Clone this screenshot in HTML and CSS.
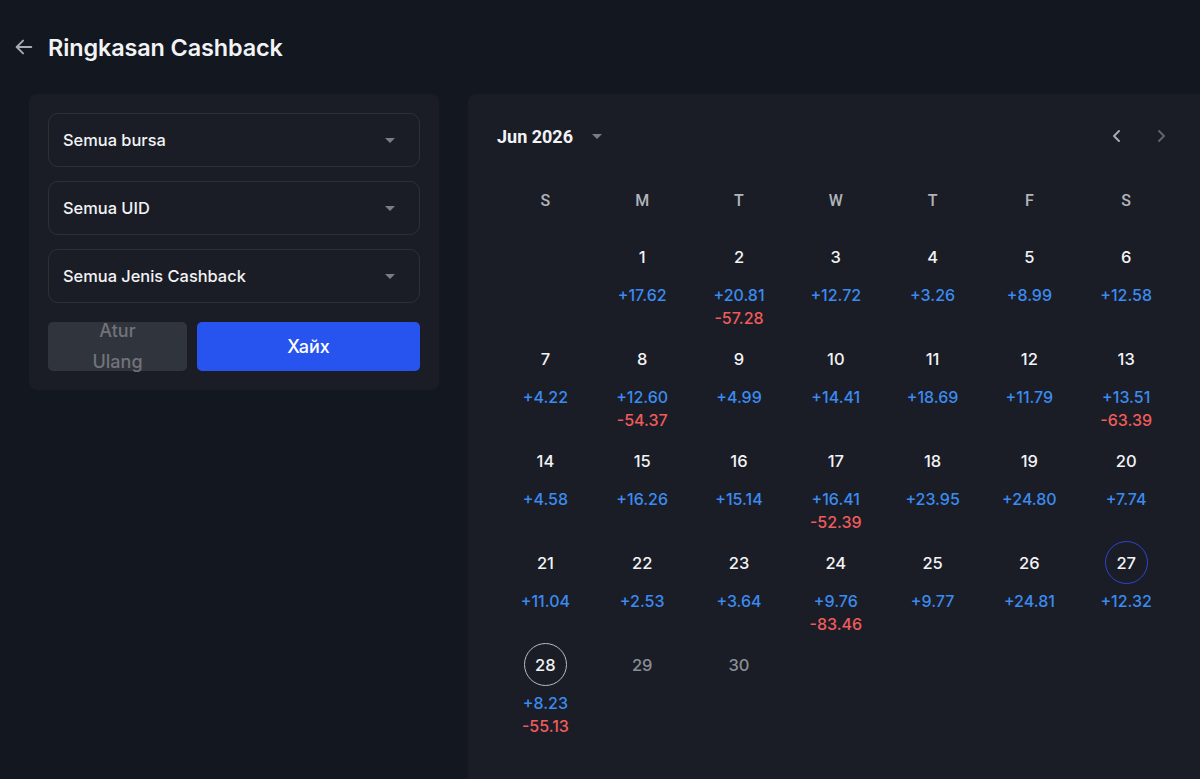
FILE: index.html
```html
<!DOCTYPE html>
<html lang="id">
<head>
  <meta charset="UTF-8">
  <meta name="viewport" content="width=device-width, initial-scale=1.0">
  <title>Ringkasan Cashback</title>
  <link rel="stylesheet" href="styles.css">
</head>
<body>
  <header class="topo">
    <button class="voltar" aria-label="Kembali">
      <svg width="22" height="22" viewBox="0 0 24 24" fill="none" stroke="currentColor" stroke-width="2" stroke-linecap="round" stroke-linejoin="round"><path d="M20 12H4"/><path d="M11 5l-7 7 7 7"/></svg>
    </button>
    <h1>Ringkasan Cashback</h1>
  </header>

  <main class="conteudo">
    <!-- Filtros -->
    <section class="filtros">
      <div class="select"><span>Semua bursa</span><i class="caret"></i></div>
      <div class="select"><span>Semua UID</span><i class="caret"></i></div>
      <div class="select"><span>Semua Jenis Cashback</span><i class="caret"></i></div>
      <div class="acoes">
        <button class="btn btn-reset">Atur Ulang</button>
        <button class="btn btn-buscar">Хайх</button>
      </div>
    </section>

    <!-- Calendário -->
    <section class="calendario">
      <div class="cal-topo">
        <div class="mes">Jun 2026 <i class="caret"></i></div>
        <div class="setas">
          <svg class="seta ativa" width="16" height="16" viewBox="0 0 16 16" fill="none" stroke="currentColor" stroke-width="2" stroke-linecap="round" stroke-linejoin="round"><path d="M10 3L5 8l5 5"/></svg>
          <svg class="seta" width="16" height="16" viewBox="0 0 16 16" fill="none" stroke="currentColor" stroke-width="2" stroke-linecap="round" stroke-linejoin="round"><path d="M6 3l5 5-5 5"/></svg>
        </div>
      </div>

      <div class="semana">
        <span>S</span><span>M</span><span>T</span><span>W</span><span>T</span><span>F</span><span>S</span>
      </div>

      <div class="dias">
        <div class="dia vazio"></div>
        <div class="dia"><b>1</b><p class="mais">+17.62</p></div>
        <div class="dia"><b>2</b><p class="mais">+20.81</p><p class="menos">-57.28</p></div>
        <div class="dia"><b>3</b><p class="mais">+12.72</p></div>
        <div class="dia"><b>4</b><p class="mais">+3.26</p></div>
        <div class="dia"><b>5</b><p class="mais">+8.99</p></div>
        <div class="dia"><b>6</b><p class="mais">+12.58</p></div>

        <div class="dia"><b>7</b><p class="mais">+4.22</p></div>
        <div class="dia"><b>8</b><p class="mais">+12.60</p><p class="menos">-54.37</p></div>
        <div class="dia"><b>9</b><p class="mais">+4.99</p></div>
        <div class="dia"><b>10</b><p class="mais">+14.41</p></div>
        <div class="dia"><b>11</b><p class="mais">+18.69</p></div>
        <div class="dia"><b>12</b><p class="mais">+11.79</p></div>
        <div class="dia"><b>13</b><p class="mais">+13.51</p><p class="menos">-63.39</p></div>

        <div class="dia"><b>14</b><p class="mais">+4.58</p></div>
        <div class="dia"><b>15</b><p class="mais">+16.26</p></div>
        <div class="dia"><b>16</b><p class="mais">+15.14</p></div>
        <div class="dia"><b>17</b><p class="mais">+16.41</p><p class="menos">-52.39</p></div>
        <div class="dia"><b>18</b><p class="mais">+23.95</p></div>
        <div class="dia"><b>19</b><p class="mais">+24.80</p></div>
        <div class="dia"><b>20</b><p class="mais">+7.74</p></div>

        <div class="dia"><b>21</b><p class="mais">+11.04</p></div>
        <div class="dia"><b>22</b><p class="mais">+2.53</p></div>
        <div class="dia"><b>23</b><p class="mais">+3.64</p></div>
        <div class="dia"><b>24</b><p class="mais">+9.76</p><p class="menos">-83.46</p></div>
        <div class="dia"><b>25</b><p class="mais">+9.77</p></div>
        <div class="dia"><b>26</b><p class="mais">+24.81</p></div>
        <div class="dia"><b class="selecionado">27</b><p class="mais">+12.32</p></div>

        <div class="dia"><b class="hoje">28</b><p class="mais">+8.23</p><p class="menos">-55.13</p></div>
        <div class="dia futuro"><b>29</b></div>
        <div class="dia futuro"><b>30</b></div>
      </div>
    </section>
  </main>
</body>
</html>
```

FILE: styles.css
```css
:root {
  --fundo: #131720;
  --painel: #1a1d26;
  --borda: #2c3039;
  --texto: #f2f3f5;
  --cinza: #8b8e95;
  --azul: #3b8bf0;
  --vermelho: #f05b5b;
  --azul-botao: #2754ef;
}

* {
  box-sizing: border-box;
}

html, body {
  height: 100%;
}

body {
  margin: 0;
  background: var(--fundo);
  color: var(--texto);
  font-family: Inter, 'Noto Sans', sans-serif;
  overflow: hidden;
}

.topo {
  height: 94px;
  display: flex;
  align-items: center;
  padding: 0 0 0 13px;
  gap: 13px;
}

.voltar {
  background: none;
  border: none;
  padding: 0;
  color: #a9acb3;
  display: flex;
  cursor: pointer;
}

.topo h1 {
  margin: 0;
  font-size: 23.4px;
  font-weight: 600;
  letter-spacing: -0.1px;
}

.conteudo {
  display: flex;
  align-items: flex-start;
  gap: 29px;
  padding-left: 29px;
  width: 1240px;
}

.filtros {
  width: 410px;
  background: var(--painel);
  border-radius: 8px;
  padding: 19px;
  display: flex;
  flex-direction: column;
  gap: 14px;
}

.select {
  height: 54px;
  border: 1px solid var(--borda);
  border-radius: 10px;
  display: flex;
  align-items: center;
  justify-content: space-between;
  padding: 0 24px 0 14px;
  font-size: 16.4px;
  font-weight: 500;
}

.caret {
  display: inline-block;
  width: 0;
  height: 0;
  border-left: 5px solid transparent;
  border-right: 5px solid transparent;
  border-top: 5px solid #7a7d84;
}

.acoes {
  display: flex;
  gap: 10px;
  margin-top: 5px;
}

.btn {
  height: 49px;
  border: none;
  border-radius: 5px;
  font-family: Inter, sans-serif;
  font-size: 18px;
  font-weight: 500;
  cursor: pointer;
}

.btn-reset {
  width: 139px;
  background: #30343c;
  color: #70737a;
  line-height: 31px;
  padding: 0 40px 2px;
  display: flex;
  flex-direction: column;
  justify-content: center;
  align-items: center;
  text-align: center;
}

.btn-buscar {
  flex: 1;
  background: var(--azul-botao);
  color: #fff;
}

.calendario {
  width: 740px;
  min-height: 700px;
  background: var(--painel);
  border-radius: 8px 0 0 0;
  padding: 26px 29px 0 29px;
}

.cal-topo {
  display: flex;
  justify-content: space-between;
  align-items: center;
  height: 32px;
}

.mes {
  font-family: Roboto, sans-serif;
  font-size: 18px;
  font-weight: 700;
  display: flex;
  align-items: center;
  gap: 19px;
}

.setas {
  display: flex;
  gap: 28px;
  margin-right: 10px;
}

.seta {
  color: #5f636b;
}

.seta.ativa {
  color: #a7aab1;
}

.semana {
  display: grid;
  grid-template-columns: repeat(7, 96.8px);
  margin-top: 24px;
  height: 48px;
  align-items: center;
  font-family: Roboto, sans-serif;
  font-size: 16px;
  font-weight: 500;
  color: #b1b4bb;
  text-align: center;
}

.dias {
  display: grid;
  grid-template-columns: repeat(7, 96.8px);
  grid-auto-rows: 102px;
  margin-top: 11px;
}

.dia {
  display: flex;
  flex-direction: column;
  align-items: center;
}

.dia b {
  width: 43px;
  height: 43px;
  border-radius: 50%;
  display: flex;
  align-items: center;
  justify-content: center;
  font-size: 16.5px;
  font-weight: 500;
  border: 1px solid transparent;
}

.dia b.selecionado {
  border-color: #2c45d4;
}

.dia b.hoje {
  border-color: #b9bbc0;
}

.dia.futuro b {
  color: var(--cinza);
}

.dia p {
  margin: 0;
  font-size: 16px;
  font-weight: 500;
  line-height: 23px;
}

.dia p.mais {
  margin-top: 6px;
  color: var(--azul);
}

.dia p.menos {
  color: var(--vermelho);
}
```
